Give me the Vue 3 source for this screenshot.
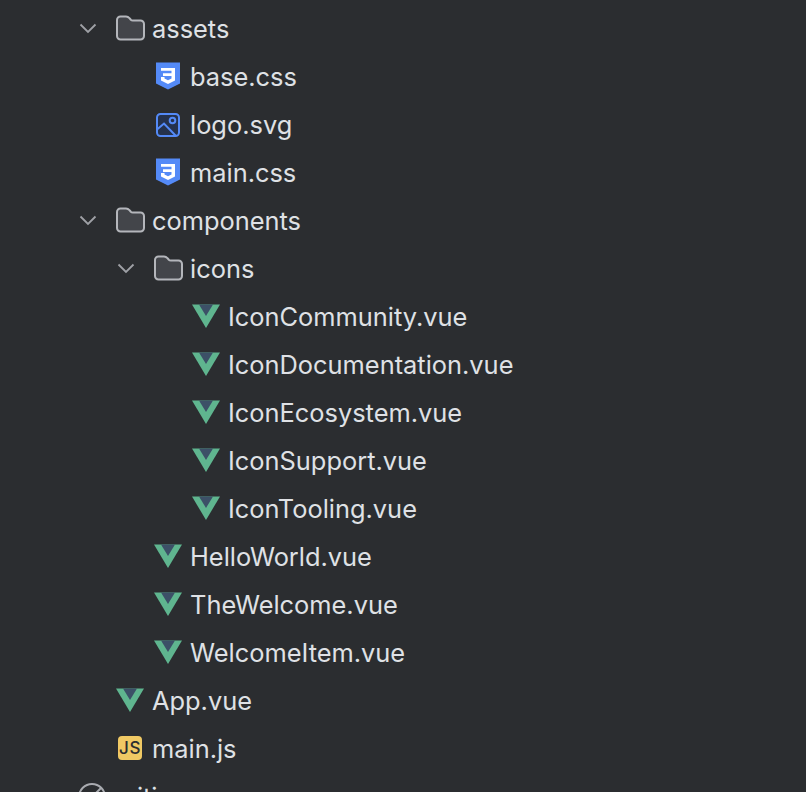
<template>
  <div class="tree">
    <div
      v-for="(row, idx) in rows"
      :key="idx"
      class="row"
      :class="`depth-${row.depth}`"
    >
      <svg v-if="row.open" class="chevron" width="20" height="12" viewBox="0 0 20 12">
        <path d="M3.500 1.500 L11 9 L18.500 1.500" fill="none" stroke="#9fa1a6" stroke-width="1.800" />
      </svg>

      <svg v-if="row.type === 'folder'" class="icon folder" width="30" height="26" viewBox="0 0 30 26">
        <path
          d="M2 5 a3.500 3.500 0 0 1 3.500 -3.500 h5.500 c2 0 2.600 0.700 3.800 2 l1 1.200 c0.600 0.600 1 0.800 2 0.800 h7.700 a3.500 3.500 0 0 1 3.500 3.500 v12 a3.500 3.500 0 0 1 -3.500 3.500 h-20 a3.500 3.500 0 0 1 -3.500 -3.500 z"
          fill="#43454a"
          stroke="#b4b6bb"
          stroke-width="2"
        />
      </svg>

      <svg v-else-if="row.type === 'css'" class="icon" width="30" height="30" viewBox="0 0 30 30">
        <path d="M3 0.500 H27 V21.500 L15 27.500 L3 21.500 Z" fill="#548af7" />
        <path d="M8 6 H22 V18.500 L15 22 L8 18.500 V15 H11.500 V16.600 L15 18.300 L18.500 16.600 V14 H10 V11.200 H18.500 V8.800 H8 Z" fill="#fff" />
      </svg>

      <svg v-else-if="row.type === 'image'" class="icon" width="30" height="28" viewBox="0 0 30 28">
        <rect x="4" y="3" width="22" height="22" rx="3.500" fill="#25324d" stroke="#548af7" stroke-width="2" />
        <path d="M4 18.500 L11 12.500 L23 25" fill="none" stroke="#548af7" stroke-width="2" />
        <circle cx="19.500" cy="9.500" r="2.800" fill="none" stroke="#548af7" stroke-width="2" />
      </svg>

      <svg v-else-if="row.type === 'vue'" class="icon" width="30" height="26" viewBox="0 0 30 26">
        <path d="M1 0.500 H29 L15 24 Z" fill="#5fb58f" />
        <path d="M8 0.500 H22 L15 12 Z" fill="#3c5067" />
      </svg>

      <div v-else-if="row.type === 'js'" class="js-badge icon">JS</div>

      <svg v-else-if="row.type === 'ignore'" class="icon" width="30" height="30" viewBox="0 0 30 30">
        <circle cx="15" cy="15" r="13" fill="none" stroke="#a9abb0" stroke-width="2" />
        <path d="M5.500 24.500 L24.500 5.500" stroke="#a9abb0" stroke-width="2" />
      </svg>

      <span class="label">{{ row.name }}</span>
    </div>
  </div>
</template>

<script setup>
const rows = [
  { name: 'assets', type: 'folder', depth: 0, open: true },
  { name: 'base.css', type: 'css', depth: 1 },
  { name: 'logo.svg', type: 'image', depth: 1 },
  { name: 'main.css', type: 'css', depth: 1 },
  { name: 'components', type: 'folder', depth: 0, open: true },
  { name: 'icons', type: 'folder', depth: 1, open: true },
  { name: 'IconCommunity.vue', type: 'vue', depth: 2 },
  { name: 'IconDocumentation.vue', type: 'vue', depth: 2 },
  { name: 'IconEcosystem.vue', type: 'vue', depth: 2 },
  { name: 'IconSupport.vue', type: 'vue', depth: 2 },
  { name: 'IconTooling.vue', type: 'vue', depth: 2 },
  { name: 'HelloWorld.vue', type: 'vue', depth: 1 },
  { name: 'TheWelcome.vue', type: 'vue', depth: 1 },
  { name: 'WelcomeItem.vue', type: 'vue', depth: 1 },
  { name: 'App.vue', type: 'vue', depth: 0 },
  { name: 'main.js', type: 'js', depth: 0 },
  { name: '.gitignore', type: 'ignore', depth: -1 },
]
</script>

<style>
html,
body {
  background: #2b2d30;
  overflow: hidden;
}
</style>

<style scoped>
.tree {
  height: 792px;
  overflow: hidden;
  padding-top: 5px;
  box-sizing: border-box;
  background: #2b2d30;
  font-family: Inter, "Liberation Sans", sans-serif;
  font-size: 25.400px;
  color: #dfe1e5;
}

.row {
  position: relative;
  display: flex;
  align-items: center;
  gap: 7px;
  height: 48px;
}

.depth--1 {
  padding-left: 77px;
}

.depth-0 {
  padding-left: 115px;
}

.depth-1 {
  padding-left: 153px;
}

.depth-2 {
  padding-left: 191px;
}

.chevron {
  position: absolute;
  margin-left: -38px;
}

.icon {
  flex: none;
}

.folder {
  margin-top: -2px;
}

.js-badge {
  display: flex;
  align-items: center;
  justify-content: center;
  width: 24px;
  height: 24px;
  margin: -2px 3px 0;
  border-radius: 4px;
  background: #f0c964;
  color: #2b2d30;
  font-size: 17px;
  font-weight: 500;
  letter-spacing: 0.5px;
}

.label {
  margin-top: -2px;
  white-space: nowrap;
}
</style>
